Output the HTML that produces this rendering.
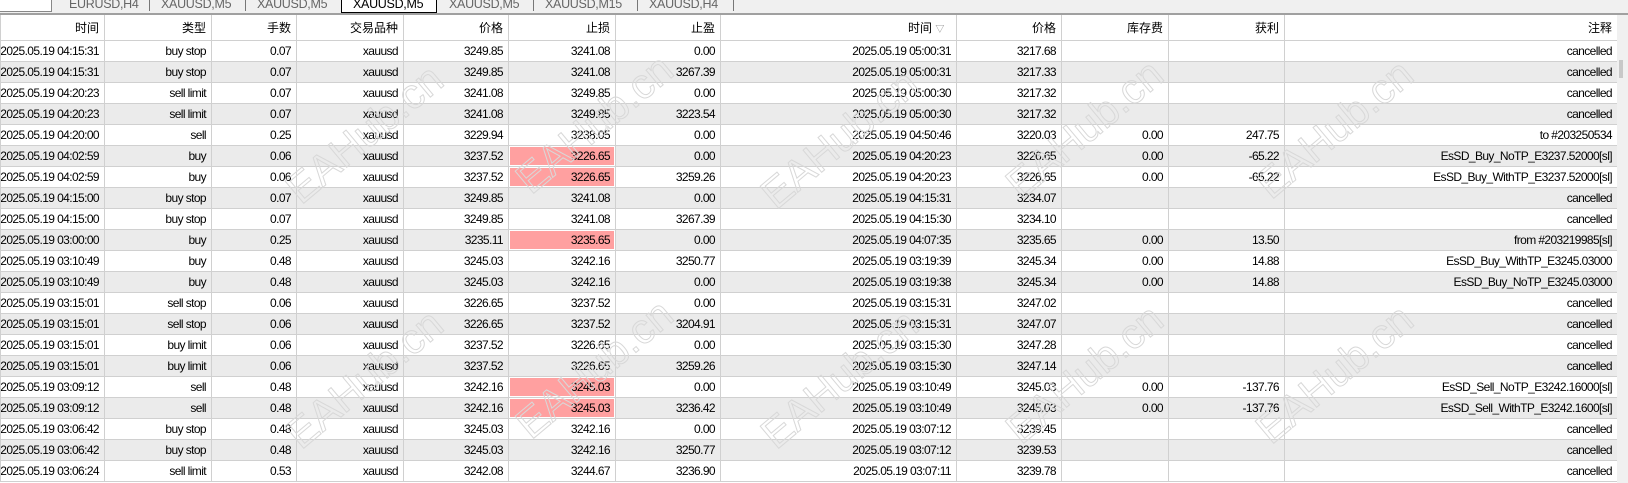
<!DOCTYPE html>
<html><head><meta charset="utf-8"><style>
body{margin:0;width:1628px;height:483px;overflow:hidden;background:#fff;font-family:"Liberation Sans","Noto Sans CJK SC",sans-serif;font-size:12px;color:#000;position:relative}
.tabs{position:absolute;left:0;top:0;width:1628px;height:13px;background:#f0f0f0;border-bottom:2px solid #a0a0a0;overflow:hidden}
.tab{position:absolute;top:-3px;font-size:12.5px;color:#666;white-space:nowrap;letter-spacing:-0.3px}
.sep{position:absolute;top:0;width:1px;height:11px;background:#777}
table{position:absolute;left:0;top:15px;border-collapse:collapse;table-layout:fixed;width:1617px}
td,th{height:20px;border:1px solid #d0d0d0;text-align:right;padding:0 5px 0 0;white-space:nowrap;overflow:hidden;font-weight:normal;letter-spacing:-0.6px}
th{height:25px;background:#fff;border-top:none;letter-spacing:0}
tr:nth-child(odd) td{background:#ebebeb}
td:first-child{direction:rtl}
td:first-child span{direction:ltr;unicode-bidi:isolate}
td.p{background:#ffa0a0!important;box-shadow:inset 0 0 0 1px #fff}
.wm{position:absolute;font-size:42px;color:transparent;-webkit-text-stroke:1px #d8d8d8;transform:rotate(-40deg);white-space:nowrap;font-family:"Liberation Sans",sans-serif}
.sb{position:absolute;left:1617px;top:15px;width:11px;height:468px;background:#f0f0f0}
</style></head><body>
<div class="tabs">
<div style="position:absolute;left:0;top:-2px;width:51px;height:13px;background:#fff;border-right:1px solid #888;border-bottom:1px solid #888"></div>
<div class="tab" style="left:69px">EURUSD,H4</div><div class="sep" style="left:149px"></div>
<div class="tab" style="left:161px">XAUUSD,M5</div><div class="sep" style="left:245px"></div>
<div class="tab" style="left:257px">XAUUSD,M5</div>
<div style="position:absolute;left:341px;top:-2px;width:94px;height:13px;background:#fff;border:1px solid #000"></div>
<div class="tab" style="left:353px;color:#000">XAUUSD,M5</div>
<div class="tab" style="left:449px">XAUUSD,M5</div><div class="sep" style="left:533px"></div>
<div class="tab" style="left:545px">XAUUSD,M15</div><div class="sep" style="left:637px"></div>
<div class="tab" style="left:649px">XAUUSD,H4</div><div class="sep" style="left:733px"></div>
</div>
<table>
<colgroup><col style="width:104px"><col style="width:107px"><col style="width:85px"><col style="width:107px"><col style="width:105px"><col style="width:107px"><col style="width:105px"><col style="width:236px"><col style="width:105px"><col style="width:107px"><col style="width:116px"><col style="width:333px"></colgroup>
<tr><th>时间</th><th>类型</th><th>手数</th><th>交易品种</th><th>价格</th><th>止损</th><th>止盈</th><th>时间 <span style="color:#888;font-size:9px">▽</span>&nbsp;&nbsp;</th><th>价格</th><th>库存费</th><th>获利</th><th>注释</th></tr>
<tr><td><span>2025.05.19 04:15:31</span></td><td>buy stop</td><td>0.07</td><td>xauusd</td><td>3249.85</td><td>3241.08</td><td>0.00</td><td>2025.05.19 05:00:31</td><td>3217.68</td><td></td><td></td><td>cancelled</td></tr>
<tr><td><span>2025.05.19 04:15:31</span></td><td>buy stop</td><td>0.07</td><td>xauusd</td><td>3249.85</td><td>3241.08</td><td>3267.39</td><td>2025.05.19 05:00:31</td><td>3217.33</td><td></td><td></td><td>cancelled</td></tr>
<tr><td><span>2025.05.19 04:20:23</span></td><td>sell limit</td><td>0.07</td><td>xauusd</td><td>3241.08</td><td>3249.85</td><td>0.00</td><td>2025.05.19 05:00:30</td><td>3217.32</td><td></td><td></td><td>cancelled</td></tr>
<tr><td><span>2025.05.19 04:20:23</span></td><td>sell limit</td><td>0.07</td><td>xauusd</td><td>3241.08</td><td>3249.85</td><td>3223.54</td><td>2025.05.19 05:00:30</td><td>3217.32</td><td></td><td></td><td>cancelled</td></tr>
<tr><td><span>2025.05.19 04:20:00</span></td><td>sell</td><td>0.25</td><td>xauusd</td><td>3229.94</td><td>3238.05</td><td>0.00</td><td>2025.05.19 04:50:46</td><td>3220.03</td><td>0.00</td><td>247.75</td><td>to #203250534</td></tr>
<tr><td><span>2025.05.19 04:02:59</span></td><td>buy</td><td>0.06</td><td>xauusd</td><td>3237.52</td><td class="p">3226.65</td><td>0.00</td><td>2025.05.19 04:20:23</td><td>3226.65</td><td>0.00</td><td>-65.22</td><td>EsSD_Buy_NoTP_E3237.52000[sl]</td></tr>
<tr><td><span>2025.05.19 04:02:59</span></td><td>buy</td><td>0.06</td><td>xauusd</td><td>3237.52</td><td class="p">3226.65</td><td>3259.26</td><td>2025.05.19 04:20:23</td><td>3226.65</td><td>0.00</td><td>-65.22</td><td>EsSD_Buy_WithTP_E3237.52000[sl]</td></tr>
<tr><td><span>2025.05.19 04:15:00</span></td><td>buy stop</td><td>0.07</td><td>xauusd</td><td>3249.85</td><td>3241.08</td><td>0.00</td><td>2025.05.19 04:15:31</td><td>3234.07</td><td></td><td></td><td>cancelled</td></tr>
<tr><td><span>2025.05.19 04:15:00</span></td><td>buy stop</td><td>0.07</td><td>xauusd</td><td>3249.85</td><td>3241.08</td><td>3267.39</td><td>2025.05.19 04:15:30</td><td>3234.10</td><td></td><td></td><td>cancelled</td></tr>
<tr><td><span>2025.05.19 03:00:00</span></td><td>buy</td><td>0.25</td><td>xauusd</td><td>3235.11</td><td class="p">3235.65</td><td>0.00</td><td>2025.05.19 04:07:35</td><td>3235.65</td><td>0.00</td><td>13.50</td><td>from #203219985[sl]</td></tr>
<tr><td><span>2025.05.19 03:10:49</span></td><td>buy</td><td>0.48</td><td>xauusd</td><td>3245.03</td><td>3242.16</td><td>3250.77</td><td>2025.05.19 03:19:39</td><td>3245.34</td><td>0.00</td><td>14.88</td><td>EsSD_Buy_WithTP_E3245.03000</td></tr>
<tr><td><span>2025.05.19 03:10:49</span></td><td>buy</td><td>0.48</td><td>xauusd</td><td>3245.03</td><td>3242.16</td><td>0.00</td><td>2025.05.19 03:19:38</td><td>3245.34</td><td>0.00</td><td>14.88</td><td>EsSD_Buy_NoTP_E3245.03000</td></tr>
<tr><td><span>2025.05.19 03:15:01</span></td><td>sell stop</td><td>0.06</td><td>xauusd</td><td>3226.65</td><td>3237.52</td><td>0.00</td><td>2025.05.19 03:15:31</td><td>3247.02</td><td></td><td></td><td>cancelled</td></tr>
<tr><td><span>2025.05.19 03:15:01</span></td><td>sell stop</td><td>0.06</td><td>xauusd</td><td>3226.65</td><td>3237.52</td><td>3204.91</td><td>2025.05.19 03:15:31</td><td>3247.07</td><td></td><td></td><td>cancelled</td></tr>
<tr><td><span>2025.05.19 03:15:01</span></td><td>buy limit</td><td>0.06</td><td>xauusd</td><td>3237.52</td><td>3226.65</td><td>0.00</td><td>2025.05.19 03:15:30</td><td>3247.28</td><td></td><td></td><td>cancelled</td></tr>
<tr><td><span>2025.05.19 03:15:01</span></td><td>buy limit</td><td>0.06</td><td>xauusd</td><td>3237.52</td><td>3226.65</td><td>3259.26</td><td>2025.05.19 03:15:30</td><td>3247.14</td><td></td><td></td><td>cancelled</td></tr>
<tr><td><span>2025.05.19 03:09:12</span></td><td>sell</td><td>0.48</td><td>xauusd</td><td>3242.16</td><td class="p">3245.03</td><td>0.00</td><td>2025.05.19 03:10:49</td><td>3245.03</td><td>0.00</td><td>-137.76</td><td>EsSD_Sell_NoTP_E3242.16000[sl]</td></tr>
<tr><td><span>2025.05.19 03:09:12</span></td><td>sell</td><td>0.48</td><td>xauusd</td><td>3242.16</td><td class="p">3245.03</td><td>3236.42</td><td>2025.05.19 03:10:49</td><td>3245.03</td><td>0.00</td><td>-137.76</td><td>EsSD_Sell_WithTP_E3242.1600[sl]</td></tr>
<tr><td><span>2025.05.19 03:06:42</span></td><td>buy stop</td><td>0.48</td><td>xauusd</td><td>3245.03</td><td>3242.16</td><td>0.00</td><td>2025.05.19 03:07:12</td><td>3239.45</td><td></td><td></td><td>cancelled</td></tr>
<tr><td><span>2025.05.19 03:06:42</span></td><td>buy stop</td><td>0.48</td><td>xauusd</td><td>3245.03</td><td>3242.16</td><td>3250.77</td><td>2025.05.19 03:07:12</td><td>3239.53</td><td></td><td></td><td>cancelled</td></tr>
<tr><td><span>2025.05.19 03:06:24</span></td><td>sell limit</td><td>0.53</td><td>xauusd</td><td>3242.08</td><td>3244.67</td><td>3236.90</td><td>2025.05.19 03:07:11</td><td>3239.78</td><td></td><td></td><td>cancelled</td></tr>
</table>
<div class="wm" style="left:270px;top:110px">EAHub.cn</div>
<div class="wm" style="left:500px;top:100px">EAHub.cn</div>
<div class="wm" style="left:745px;top:115px">EAHub.cn</div>
<div class="wm" style="left:990px;top:105px">EAHub.cn</div>
<div class="wm" style="left:1240px;top:105px">EAHub.cn</div>
<div class="wm" style="left:270px;top:355px">EAHub.cn</div>
<div class="wm" style="left:500px;top:345px">EAHub.cn</div>
<div class="wm" style="left:745px;top:355px">EAHub.cn</div>
<div class="wm" style="left:990px;top:350px">EAHub.cn</div>
<div class="wm" style="left:1240px;top:350px">EAHub.cn</div>
<div class="sb"><div style="position:absolute;left:2px;top:45px;width:4px;height:18px;background:#c8c8c8"></div></div>
</body></html>
